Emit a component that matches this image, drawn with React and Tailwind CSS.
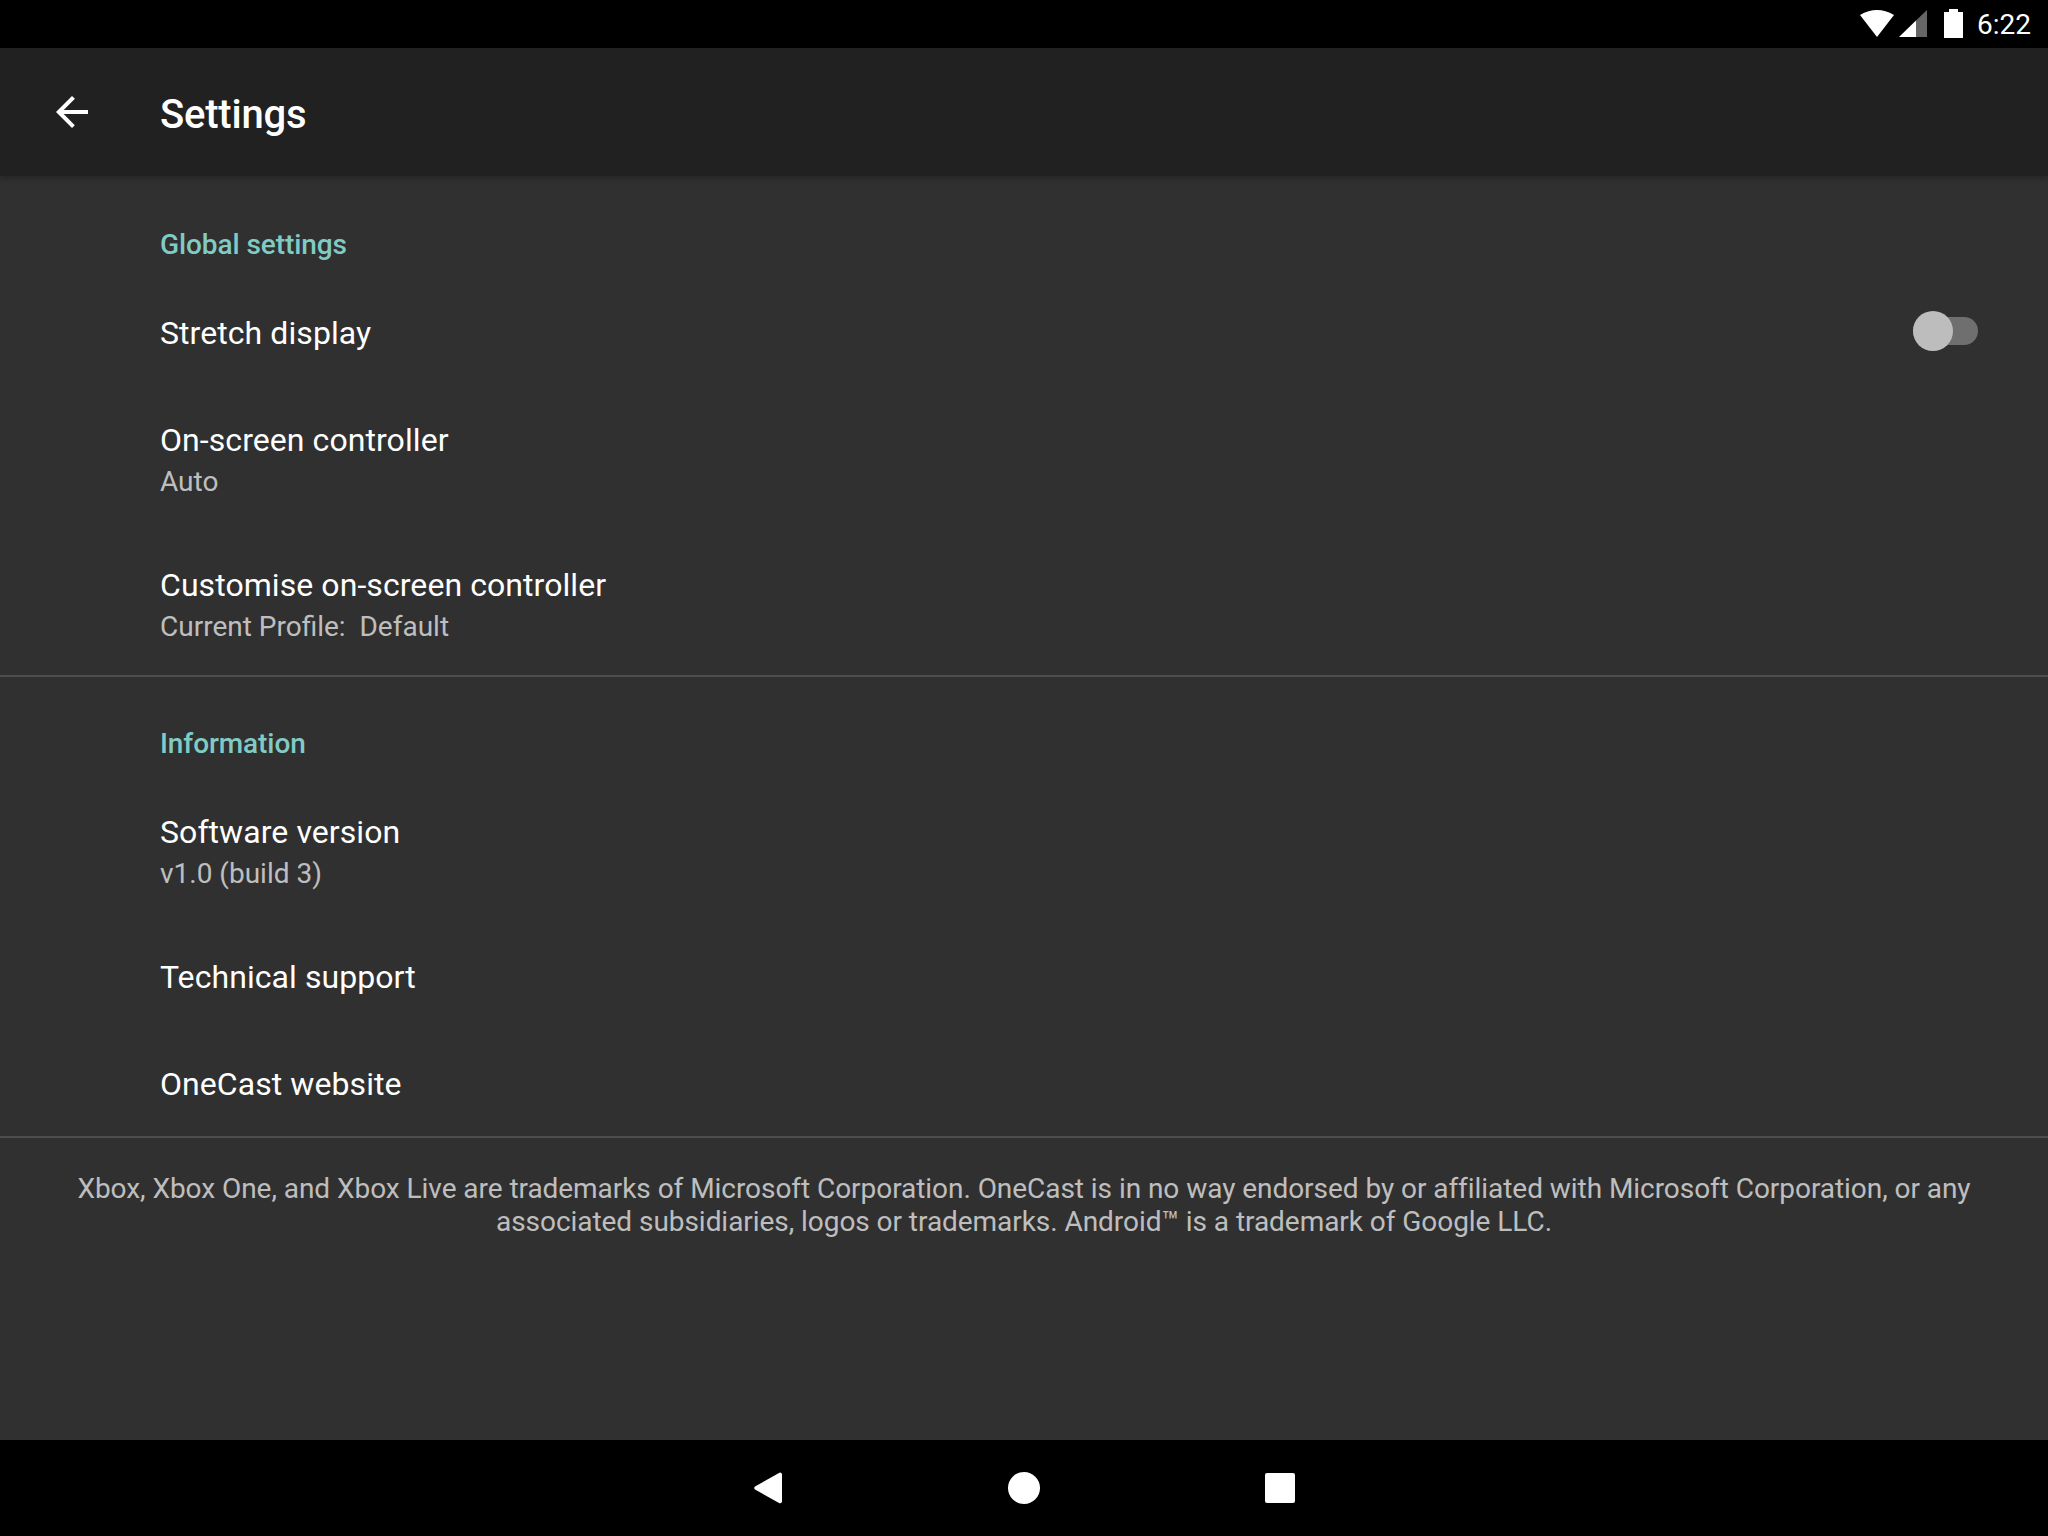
import { Fragment } from "react"

const font = { fontFamily: "Roboto, sans-serif" }

const Category = ({ title, className }) => (
  <div
    className={`pl-[160px] text-[28px] leading-[32px] font-medium tracking-[-0.08px] text-[#80cbc4] ${className}`}
  >
    {title}
  </div>
)

const Row = ({ title, summary, children }) => (
  <div
    className={`flex items-center justify-between pl-[160px] pr-[70px] ${
      summary ? "h-[145px] pt-[4px]" : "h-[107px]"
    }`}
  >
    <div>
      <div className="text-[32px] leading-[40px] tracking-[0.07px] text-white">{title}</div>
      {summary && (
        <div className="mt-[2px] text-[28px] leading-[40px] text-[#ffffffb3]">{summary}</div>
      )}
    </div>
    {children}
  </div>
)

const Toggle = () => (
  <div className="relative mb-[3px] h-[28px] w-[65px] rounded-full bg-[#6f6f6f]">
    <div className="absolute left-0 top-[-6px] h-[40px] w-[40px] rounded-full bg-[#bdbdbd]" />
  </div>
)

const sections = [
  {
    title: "Global settings",
    className: "h-[103px] pt-[53px]",
    rows: [
      { title: "Stretch display", toggle: true },
      { title: "On-screen controller", summary: "Auto" },
      { title: "Customise on-screen controller", summary: "Current Profile:\u00a0\u00a0Default" },
    ],
  },
  {
    title: "Information",
    className: "h-[100px] pt-[50px]",
    rows: [
      { title: "Software version", summary: "v1.0 (build 3)" },
      { title: "Technical support" },
      { title: "OneCast website" },
    ],
  },
]

export default function App() {
  return (
    <div className="flex h-[1536px] w-[2048px] flex-col overflow-hidden bg-[#303030]" style={font}>
      {/* status bar */}
      <div className="flex h-[48px] items-center justify-end bg-black pr-[17px]">
        <svg width="34" height="27" viewBox="0 0 34 27" className="mb-[1px] mr-[5px]">
          <path d="M17 27 0 5Q17-5 34 5z" fill="#fff" />
        </svg>
        <svg width="28" height="27" viewBox="0 0 28 27" className="mb-[1px] mr-[17px]">
          <path d="M0 27 17 10.600V27z" fill="#fff" />
          <path d="M17 10.600 28 0V27H17z" fill="#666" />
        </svg>
        <svg width="19" height="29" viewBox="0 0 19 29" className="mb-[1px] mr-[14px]">
          <path d="M5 0h9v3h5v26H0V3h5z" fill="#fff" />
        </svg>
        <span className="mt-[2px] text-[28px] leading-none font-normal text-white">6:22</span>
      </div>

      {/* toolbar */}
      <div className="relative flex h-[128px] items-center bg-[#212121] shadow-[0_2px_6px_rgba(0,0,0,0.25)]">
        <svg width="32" height="32" viewBox="0 0 32 32" className="ml-[56px]">
          <path d="M32 14H7.700L18.900 2.800 16 0 0 16l16 16 2.800-2.800L7.700 18H32z" fill="#fff" />
        </svg>
        <h1 className="ml-[72px] mt-[5px] text-[40px] leading-none font-medium tracking-[-0.2px] text-white">
          Settings
        </h1>
      </div>

      {/* list */}
      <div className="flex-1">
        {sections.map((section) => (
          <Fragment key={section.title}>
            <Category title={section.title} className={section.className} />
            {section.rows.map((row) => (
              <Row key={row.title} title={row.title} summary={row.summary}>
                {row.toggle && <Toggle />}
              </Row>
            ))}
            <div className="-mt-px mb-px h-[2px] bg-[#4d4d4d]" />
          </Fragment>
        ))}
        <p className="px-[70px] pt-[33px] text-center text-[28px] leading-[33px] tracking-[-0.05px] text-[#ffffffb3]">
          Xbox, Xbox One, and Xbox Live are trademarks of Microsoft Corporation. OneCast is in no way
          endorsed by or affiliated with Microsoft Corporation, or any associated subsidiaries, logos
          or trademarks. Android™ is a trademark of Google LLC.
        </p>
      </div>

      {/* nav bar */}
      <div className="flex h-[96px] items-center justify-center bg-black">
        <svg width="28" height="32" viewBox="0 0 28 32" className="mr-[226px]">
          <path d="M26 0.500a2 2 0 0 1 2 2v27a2 2 0 0 1-3 1.500L1 17.500a2 2 0 0 1 0-3L25 1z" fill="#fff" />
        </svg>
        <div className="h-[32px] w-[32px] rounded-full bg-white" />
        <div className="ml-[225px] h-[30px] w-[30px] rounded-[2px] bg-white" />
      </div>
    </div>
  )
}
